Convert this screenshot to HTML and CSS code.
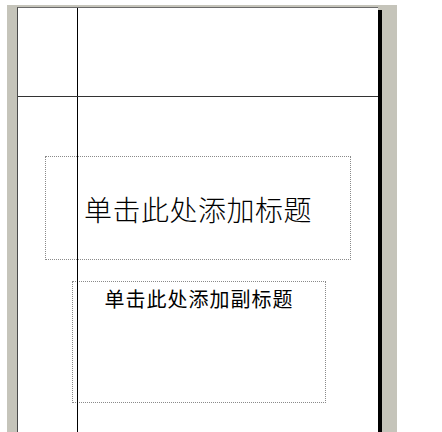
FILE: index.html
```html
<!DOCTYPE html>
<html lang="zh-CN">
<head>
<meta charset="utf-8">
<title>幻灯片</title>
<link rel="stylesheet" href="styles.css">
</head>
<body>
<div class="workspace">
  <div class="slide">
    <div class="placeholder title-box"><span class="title-text">单击此处添加标题</span></div>
    <div class="placeholder subtitle-box"><span class="subtitle-text">单击此处添加副标题</span></div>
    <div class="guide guide-v"></div>
    <div class="guide guide-h"></div>
  </div>
</div>
</body>
</html>
```
FILE: styles.css
```css
html, body {
  margin: 0;
  padding: 0;
  background: #ffffff;
  width: 442px;
  height: 432px;
  overflow: hidden;
}

.workspace {
  margin: 5px 0 0 7px;
  width: 390px;
  height: 427px;
  background: #c5c4ba;
  padding: 2px 0 0 10px;
  box-sizing: border-box;
  overflow: hidden;
}

.slide {
  position: relative;
  width: 361px;
  height: 600px;
  box-sizing: border-box;
  background: #ffffff;
  border-left: 1px solid #4a4a4a;
  border-top: 1px solid #6a6a6a;
  box-shadow: 4px 3px 0 #000000;
  font-family: "Noto Sans CJK SC", "Noto Sans", sans-serif;
  color: #000;
}

.placeholder {
  position: absolute;
  box-sizing: border-box;
  border: 1px dotted #8a8a8a;
  display: flex;
  justify-content: center;
}

.title-box {
  left: 27px;
  top: 148px;
  width: 306px;
  height: 104px;
  align-items: center;
}

.title-text {
  font-size: 28px;
  line-height: 34px;
  font-weight: 300;
  letter-spacing: 0.5px;
  padding-top: 2px;
}

.subtitle-box {
  left: 54px;
  top: 273px;
  width: 254px;
  height: 122px;
  align-items: flex-start;
}

.subtitle-text {
  font-size: 20px;
  line-height: 24px;
  padding-top: 5px;
  letter-spacing: 1px;
}

.guide {
  position: absolute;
  background: #000;
  z-index: 2;
}

.guide-v {
  left: 59px;
  top: 0;
  width: 1px;
  height: 100%;
}

.guide-h {
  left: 0;
  top: 88px;
  width: 100%;
  height: 1px;
  background: #333;
}
```
